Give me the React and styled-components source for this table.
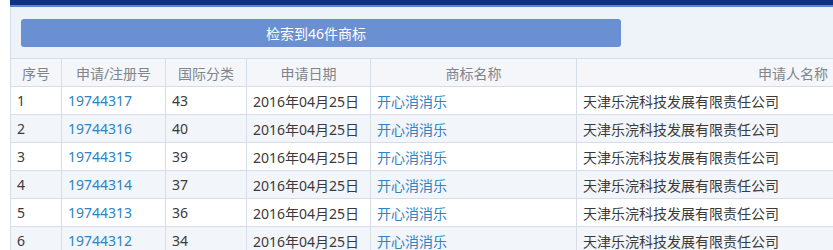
import React from 'react';
import styled, { createGlobalStyle } from 'styled-components';

const GlobalStyle = createGlobalStyle`
  html, body {
    margin: 0;
    padding: 0;
    background: #ffffff;
    overflow: hidden;
  }
  body {
    font-family: "Noto Sans", "Noto Sans CJK SC", "Liberation Sans", sans-serif;
    font-size: 14px;
    color: #3a3a3a;
  }
`;

const rows = [
  { no: 1, reg: '19744317', cls: '43' },
  { no: 2, reg: '19744316', cls: '40' },
  { no: 3, reg: '19744315', cls: '39' },
  { no: 4, reg: '19744314', cls: '37' },
  { no: 5, reg: '19744313', cls: '36' },
  { no: 6, reg: '19744312', cls: '34' },
];

const columns = [
  { title: '序号', width: 51 },
  { title: '申请/注册号', width: 104 },
  { title: '国际分类', width: 81 },
  { title: '申请日期', width: 124 },
  { title: '商标名称', width: 206 },
  { title: '申请人名称', width: 257, align: 'right' },
];

const App = () => {
  return (
    <>
      <GlobalStyle />
      <Page>
        <TopBar />
        <Toolbar>
          <ResultButton type="button">检索到46件商标</ResultButton>
        </Toolbar>
        <Table>
          <colgroup>
            {columns.map((c) => (
              <col key={c.title} style={{ width: c.width }} />
            ))}
          </colgroup>
          <thead>
            <tr>
              {columns.map((c) => (
                <HeadCell key={c.title} $align={c.align}>
                  {c.title}
                </HeadCell>
              ))}
            </tr>
          </thead>
          <tbody>
            {rows.map((r) => (
              <Row key={r.no} $striped={r.no % 2 === 0}>
                <Cell>{r.no}</Cell>
                <Cell>
                  <Link href="#">{r.reg}</Link>
                </Cell>
                <Cell>{r.cls}</Cell>
                <Cell>2016年04月25日</Cell>
                <Cell>
                  <Link href="#">开心消消乐</Link>
                </Cell>
                <Cell>天津乐浣科技发展有限责任公司</Cell>
              </Row>
            ))}
          </tbody>
        </Table>
      </Page>
    </>
  );
};

export default App;

const Page = styled.div`
  padding-left: 10px;
  width: 823px;
`;

const TopBar = styled.div`
  height: 5px;
  background: #102f85;
  border-bottom: 2px solid #5a86cf;
`;

const Toolbar = styled.div`
  display: flex;
  align-items: center;
  height: 51px;
  padding-left: 10px;
  background: #eef3f9;
  border-left: 1px solid #d6dde6;
  box-sizing: border-box;
`;

const ResultButton = styled.button`
  width: 600px;
  height: 28px;
  padding: 0 10px 0 0;
  border: none;
  border-radius: 3px;
  background: #6a8fd2;
  color: #ffffff;
  font-family: inherit;
  font-size: 14px;
  cursor: pointer;
`;

const Table = styled.table`
  width: 823px;
  table-layout: fixed;
  border-collapse: collapse;
  border-left: 1px solid #d6dde6;
`;

const HeadCell = styled.th`
  height: 27px;
  padding: 0 5px;
  background: #f4f6f9;
  color: #80858c;
  font-weight: normal;
  text-align: ${({ $align }) => $align || 'center'};
  border: 1px solid #d6dde6;
  border-left: none;
  white-space: nowrap;
`;

const Row = styled.tr`
  background: ${({ $striped }) => ($striped ? '#f2f5fa' : '#ffffff')};
`;

const Cell = styled.td`
  height: 27px;
  padding: 0 6px;
  border-right: 1px solid #d6dde6;
  border-bottom: 1px solid #d6dde6;
  white-space: nowrap;
  overflow: hidden;
`;

const Link = styled.a`
  color: #2f83c0;
  text-decoration: none;
`;
